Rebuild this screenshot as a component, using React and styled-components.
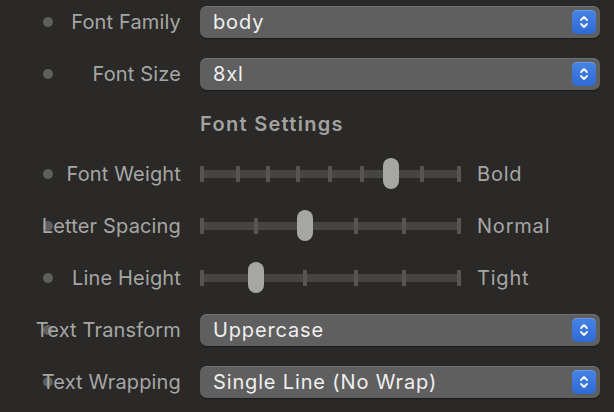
import React from "react";
import styled, { createGlobalStyle } from "styled-components";

const GlobalStyle = createGlobalStyle`
	html, body {
		margin: 0;
		padding: 0;
		background: #2a2927;
	}
	body {
		font-family: Inter, "Liberation Sans", sans-serif;
		-webkit-font-smoothing: antialiased;
	}
`;

const Panel = styled.div`
	width: 614px;
	height: 412px;
	box-sizing: border-box;
	padding-top: 6px;
	display: flex;
	flex-direction: column;
	gap: 20px;
	background: #2a2927;
	overflow: hidden;
`;

const Row = styled.div`
	display: grid;
	grid-template-columns: 181px 1fr;
	column-gap: 19px;
	align-items: center;
	height: ${(p) => (p.$heading ? "28px" : "32px")};
`;

const LabelCell = styled.div`
	display: grid;
	align-items: center;
`;

const Dot = styled.span`
	grid-area: 1 / 1;
	justify-self: start;
	margin-left: 43px;
	width: 10px;
	height: 10px;
	border-radius: 50%;
	background: #5f5f5e;
`;

const Label = styled.span`
	grid-area: 1 / 1;
	justify-self: end;
	font-size: 20px;
	color: #a6a6a5;
	white-space: nowrap;
	letter-spacing: 0.15px;
`;

const Heading = styled.div`
	grid-column: 2;
	font-size: 20px;
	font-weight: 600;
	letter-spacing: 1.3px;
	color: #a2a2a1;
`;

const Popup = styled.div`
	width: 400px;
	height: 32px;
	box-sizing: border-box;
	display: flex;
	align-items: center;
	justify-content: space-between;
	padding: 0 4px 0 13px;
	border-radius: 7px;
	background: #5f5f5f;
	box-shadow: inset 0 1px 0 #6f6f6f, 0 1px 1px rgba(0, 0, 0, 0.35);
`;

const PopupValue = styled.span`
	font-size: 20px;
	letter-spacing: 0.85px;
	color: #efefef;
	white-space: nowrap;
`;

const Stepper = styled.span`
	width: 24px;
	height: 24px;
	border-radius: 5px;
	background: linear-gradient(#4683e6, #2f6ad4);
	box-shadow: inset 0 1px 0 rgba(255, 255, 255, 0.18);
	display: flex;
	align-items: center;
	justify-content: center;
`;

const SliderWrap = styled.div`
	display: flex;
	align-items: center;
	gap: 16px;
`;

const Track = styled.div`
	position: relative;
	width: 261px;
	height: 32px;
	&::before {
		content: "";
		position: absolute;
		left: 0;
		right: 0;
		top: 12px;
		height: 8px;
		background: #464543;
	}
`;

const Tick = styled.span`
	position: absolute;
	top: 8px;
	width: 4px;
	height: 16px;
	margin-left: -2px;
	background: #565554;
`;

const Thumb = styled.span`
	position: absolute;
	top: 0;
	width: 16px;
	height: 31px;
	margin-left: -8px;
	border-radius: 8px;
	background: #a6a6a5;
`;

const SliderValue = styled.span`
	font-size: 20px;
	letter-spacing: 0.8px;
	color: #a6a6a5;
`;

const Chevrons = () => (
	<svg width="12" height="16" viewBox="0 0 12 16" fill="none">
		<path d="M3 6 L6 3 L9 6" stroke="#fff" strokeWidth="1.8" strokeLinecap="round" strokeLinejoin="round" />
		<path d="M3 10 L6 13 L9 10" stroke="#fff" strokeWidth="1.8" strokeLinecap="round" strokeLinejoin="round" />
	</svg>
);

const LabelBlock = ({ text }) => (
	<LabelCell>
		<Dot />
		<Label>{text}</Label>
	</LabelCell>
);

const PopupRow = ({ label, value }) => (
	<Row>
		<LabelBlock text={label} />
		<Popup>
			<PopupValue>{value}</PopupValue>
			<Stepper>
				<Chevrons />
			</Stepper>
		</Popup>
	</Row>
);

// tick positions measured in px from the track's left edge
const SliderRow = ({ label, ticks, thumb, value }) => (
	<Row>
		<LabelBlock text={label} />
		<SliderWrap>
			<Track>
				{ticks.map((x) => (
					<Tick key={x} style={{ left: x }} />
				))}
				<Thumb style={{ left: thumb }} />
			</Track>
			<SliderValue>{value}</SliderValue>
		</SliderWrap>
	</Row>
);

const weightTicks = [2, 38, 68, 98, 130, 162, 194, 222, 259];
const fiveStepTicks = [2, 56, 105, 156, 204, 259];

export default function App() {
	return (
		<>
			<GlobalStyle />
			<Panel>
				<PopupRow label="Font Family" value="body" />
				<PopupRow label="Font Size" value="8xl" />
				<Row $heading>
					<Heading>Font Settings</Heading>
				</Row>
				<SliderRow label="Font Weight" ticks={weightTicks} thumb={191} value="Bold" />
				<SliderRow label="Letter Spacing" ticks={fiveStepTicks} thumb={105} value="Normal" />
				<SliderRow label="Line Height" ticks={fiveStepTicks} thumb={56} value="Tight" />
				<PopupRow label="Text Transform" value="Uppercase" />
				<PopupRow label="Text Wrapping" value="Single Line (No Wrap)" />
			</Panel>
		</>
	);
}
